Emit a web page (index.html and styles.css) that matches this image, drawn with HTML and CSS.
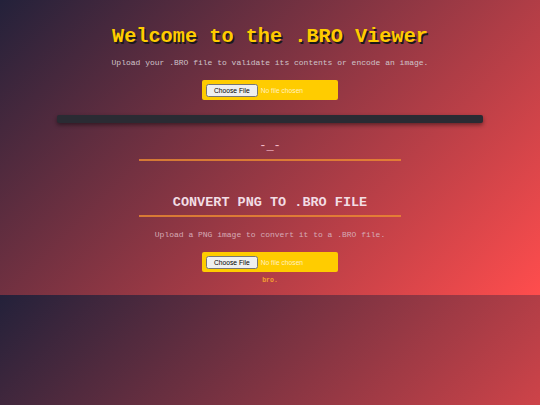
FILE: index.html
```html
<!DOCTYPE html>
<html>
<head>
<meta charset="utf-8">
<link rel="stylesheet" href="styles.css">
</head>
<body>
<main class="page">
  <h1 class="title">Welcome to the .BRO Viewer</h1>
  <p class="lead">Upload your .BRO file to validate its contents or encode an image.</p>
  <input class="file" type="file">
  <div class="bar"></div>
  <div class="face">-_-</div>
  <h2 class="section-title">CONVERT PNG TO .BRO FILE</h2>
  <p class="lead faded">Upload a PNG image to convert it to a .BRO file.</p>
  <input class="file" type="file">
  <div class="tag">bro.</div>
</main>
</body>
</html>
```
FILE: styles.css
```css
html, body {
  margin: 0;
  padding: 0;
}
body {
  background: linear-gradient(135deg, #23213a 0%, #ff4d4d 100%);
  font-family: "Liberation Mono", "Courier New", monospace;
}
.page {
  display: flex;
  flex-direction: column;
  align-items: center;
  padding: 25px 0 10px;
}
.title {
  margin: 0;
  font-size: 20.25px;
  line-height: 24px;
  font-weight: bold;
  color: #ffcc00;
  text-shadow: 1.5px 1.5px 0 #1a1a1a;
}
.lead {
  margin: 9px 0 0;
  font-size: 8px;
  line-height: 10px;
  color: #cfc3c9;
}
.lead.faded {
  margin-top: 13px;
  color: #d6aab5;
}
.file {
  margin-top: 12px;
  box-sizing: border-box;
  width: 136px;
  height: 20px;
  padding: 4px;
  background: #ffcc00;
  border-radius: 2px;
  color: rgba(255, 255, 255, 0.75);
  font-family: "Liberation Sans", Arial, sans-serif;
  font-size: 6.7px;
}
.file::file-selector-button {
  font-family: "Liberation Sans", Arial, sans-serif;
  font-size: 6.7px;
  margin-right: 3px;
}
.bar {
  margin-top: 15px;
  width: 426px;
  height: 8px;
  background: #2a2b33;
  border-radius: 2px;
  box-shadow: 0 2px 4px rgba(0, 0, 0, 0.45);
}
.face {
  margin-top: 16px;
  width: 262px;
  text-align: center;
  font-size: 12px;
  line-height: 14px;
  color: #f3b9c9;
  padding-bottom: 6px;
  border-bottom: 2px solid rgba(236, 140, 50, 0.8);
}
.section-title {
  margin: 34px 0 0;
  width: 262px;
  text-align: center;
  font-size: 13.5px;
  line-height: 16px;
  font-weight: bold;
  color: #f2dde4;
  padding-bottom: 4px;
  border-bottom: 2px solid rgba(236, 140, 50, 0.8);
}
.tag {
  margin-top: 5px;
  font-size: 6.5px;
  line-height: 8px;
  font-weight: bold;
  color: #f5a030;
}
```
